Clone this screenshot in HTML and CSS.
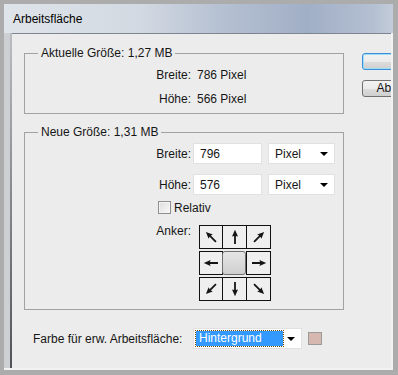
FILE: index.html
```html
<!DOCTYPE html>
<html lang="de">
<head>
    <meta charset="UTF-8">
    <meta name="viewport" content="width=device-width, initial-scale=1.0">
    <title>Arbeitsfläche</title>
    <link rel="stylesheet" href="styles.css">
</head>
<body>

    <!-- shared arrow shape for the anchor buttons -->
    <svg class="defs" width="0" height="0">
        <defs>
            <path id="arr" d="M8 0.8 L11 7.6 L8.9 6.9 L8.9 15 L7.1 15 L7.1 6.9 L5 7.6 Z"/>
        </defs>
    </svg>

    <div class="window">
        <div class="titlebar">Arbeitsfläche</div>

        <div class="frame">
            <div class="frame-left"></div>

            <div class="client">
                <div class="main">
                    <fieldset class="group current">
                        <legend>Aktuelle Größe: 1,27 MB</legend>
                        <div class="row">
                            <span class="label">Breite:</span>
                            <span class="value">786 Pixel</span>
                        </div>
                        <div class="row">
                            <span class="label">Höhe:</span>
                            <span class="value">566 Pixel</span>
                        </div>
                    </fieldset>

                    <fieldset class="group new">
                        <legend>Neue Größe: 1,31 MB</legend>
                        <div class="field">
                            <span class="label">Breite:</span>
                            <input class="num" type="text" value="796">
                            <div class="select unit"><span>Pixel</span><i class="caret"></i></div>
                        </div>
                        <div class="field">
                            <span class="label">Höhe:</span>
                            <input class="num" type="text" value="576">
                            <div class="select unit"><span>Pixel</span><i class="caret"></i></div>
                        </div>
                        <label class="check">
                            <input type="checkbox">
                            <span>Relativ</span>
                        </label>
                        <div class="anchor-row">
                            <span class="label">Anker:</span>
                            <div class="anchor">
                                <div class="cell"><svg viewBox="0 0 16 16"><use href="#arr" transform="rotate(-45 8 8)"/></svg></div>
                                <div class="cell"><svg viewBox="0 0 16 16"><use href="#arr"/></svg></div>
                                <div class="cell"><svg viewBox="0 0 16 16"><use href="#arr" transform="rotate(45 8 8)"/></svg></div>
                                <div class="cell"><svg viewBox="0 0 16 16"><use href="#arr" transform="rotate(-90 8 8)"/></svg></div>
                                <div class="cell on"></div>
                                <div class="cell"><svg viewBox="0 0 16 16"><use href="#arr" transform="rotate(90 8 8)"/></svg></div>
                                <div class="cell"><svg viewBox="0 0 16 16"><use href="#arr" transform="rotate(-135 8 8)"/></svg></div>
                                <div class="cell"><svg viewBox="0 0 16 16"><use href="#arr" transform="rotate(180 8 8)"/></svg></div>
                                <div class="cell"><svg viewBox="0 0 16 16"><use href="#arr" transform="rotate(135 8 8)"/></svg></div>
                            </div>
                        </div>
                    </fieldset>

                    <div class="bg-row">
                        <span class="bg-label">Farbe für erw. Arbeitsfläche:</span>
                        <div class="select bg-select">
                            <span class="picked">Hintergrund</span><i class="caret"></i>
                        </div>
                        <span class="swatch"></span>
                    </div>
                </div>

                <div class="buttons">
                    <button class="btn default">OK</button>
                    <button class="btn">Abbrechen</button>
                </div>
            </div>

            <div class="frame-right"></div>
        </div>
        <div class="frame-bottom"></div>
    </div>

</body>
</html>
```

FILE: styles.css
```css
body {
    margin: 0;
    width: 398px;
    height: 375px;
    overflow: hidden;
    background: #acacac;
    font-family: "Liberation Sans", Arial, sans-serif;
    font-size: 12px;
    color: #161616;
}
.defs {
    display: block;
    width: 0;
    height: 0;
}
.window {
    width: 389px;
    height: 366px;
    margin: 4px 0 0 4px;
    display: flex;
    flex-direction: column;
}
.titlebar {
    flex: 0 0 auto;
    height: 29px;
    line-height: 31px;
    padding-left: 9px;
    color: #000;
    background: linear-gradient(90deg, #dfe4ea 0%, #d3d9e2 35%, #b6c1d2 55%, #a1afc6 78%, #b4c0d2 95%, #c3ccd9 100%);
}
.frame {
    flex: 1;
    display: flex;
    min-height: 0;
}
.frame-left {
    flex: 0 0 8px;
    background: linear-gradient(to bottom, #b9bdc3, #50545a) right / 2px 100% no-repeat, #cdcfd2;
}
.frame-right {
    flex: 0 0 2px;
    background: #f2f2f2;
}
.frame-bottom {
    height: 2px;
    background: #f2f2f2;
}
.client {
    flex: 1 1 0;
    min-width: 0;
    display: flex;
    align-items: flex-start;
    padding: 12px 0 0 12px;
    background: #ececec;
    border-top: 1px solid #7d8591;
    overflow: hidden;
}
.main {
    flex: 0 0 320px;
}

/* group boxes */
.group {
    margin: 0;
    padding: 0;
    border: 1px solid #a2a2a2;
    min-width: 0;
}
.group legend {
    margin-left: 13px;
    padding: 0 3px;
    line-height: 14px;
}
.current {
    padding: 3px 0 2px;
}
.new {
    margin-top: 11px;
    padding: 4px 0 8px;
}
.row {
    display: flex;
    line-height: 24px;
}
.label {
    width: 166px;
    text-align: right;
    flex: 0 0 auto;
}
.value {
    margin-left: 6px;
}

/* fields */
.field {
    display: flex;
    align-items: center;
    height: 21px;
}
.field + .field {
    margin-top: 10px;
}
.num {
    width: 69px;
    height: 21px;
    margin: 0 0 0 2px;
    padding: 0 0 0 6px;
    box-sizing: border-box;
    border: 1px solid #e1e1e1;
    background: #fff;
    font: inherit;
    color: inherit;
    outline: none;
}
.select {
    display: flex;
    align-items: center;
    box-sizing: border-box;
    height: 21px;
    border: 1px solid #e1e1e1;
    background: #fff;
}
.unit {
    width: 67px;
    margin-left: 6px;
    padding: 0 0 0 6px;
}
.unit span {
    flex: 1;
}
.caret {
    width: 0;
    height: 0;
    margin-right: 6px;
    border-left: 4px solid transparent;
    border-right: 4px solid transparent;
    border-top: 4px solid #000;
}

.check {
    display: flex;
    align-items: center;
    height: 13px;
    margin: 6px 0 0 133px;
}
.check input {
    appearance: none;
    width: 13px;
    height: 13px;
    margin: 0 3px 0 0;
    border: 1px solid #8e8f8f;
    background: linear-gradient(135deg, #dcdcdc, #fbfbfb);
    box-shadow: inset 0 0 0 1px #f4f4f4;
}

/* anchor grid */
.anchor-row {
    display: flex;
    align-items: flex-start;
    margin-top: 11px;
}
.anchor-row .label {
    line-height: 13px;
}
.anchor {
    margin-left: 8px;
    display: grid;
    grid-template-columns: repeat(3, 24px);
    grid-auto-rows: 24px;
    row-gap: 2px;
}
.cell {
    display: flex;
    align-items: center;
    justify-content: center;
    border: 1px solid #111;
    background: #efefef;
}
.cell:not(:nth-child(3n+1)) {
    margin-left: -1px;
}
.cell svg {
    width: 16px;
    height: 16px;
    fill: #151515;
}
.cell.on {
    border-color: #6f6f6f;
    border-radius: 3px;
    background: linear-gradient(#e6e6e6, #cfcfcf);
    margin-right: 1px;
}

/* background colour row */
.bg-row {
    display: flex;
    align-items: center;
    margin-top: 18px;
}
.bg-label {
    width: 160px;
    margin-left: 9px;
}
.bg-select {
    width: 109px;
    padding: 2px 0 2px 2px;
}
.picked {
    width: 87px;
    height: 15px;
    line-height: 15px;
    padding-left: 3px;
    box-sizing: border-box;
    background: #3399ff;
    color: #fff;
    outline: 1px dotted #7a4a00;
    margin-right: auto;
}
.swatch {
    width: 14px;
    height: 13px;
    margin-left: 6px;
    box-sizing: border-box;
    border: 1px solid #9a9a9a;
    background: #d6b8b1;
}

/* dialog buttons, cut off by the right edge */
.buttons {
    flex: 0 0 auto;
    margin: 7px 0 0 18px;
    display: flex;
    flex-direction: column;
    gap: 10px;
}
.btn {
    width: 87px;
    height: 17px;
    padding: 0;
    border: 1px solid #707070;
    border-radius: 3px;
    background: linear-gradient(#f3f3f3 0%, #ebebeb 50%, #dddddd 51%, #cfcfcf 100%);
    font: inherit;
    line-height: 15px;
    color: #161616;
}
.btn.default {
    border-color: #3c8fd6;
    box-shadow: inset 0 0 0 1px #9fdcf8;
}
```
